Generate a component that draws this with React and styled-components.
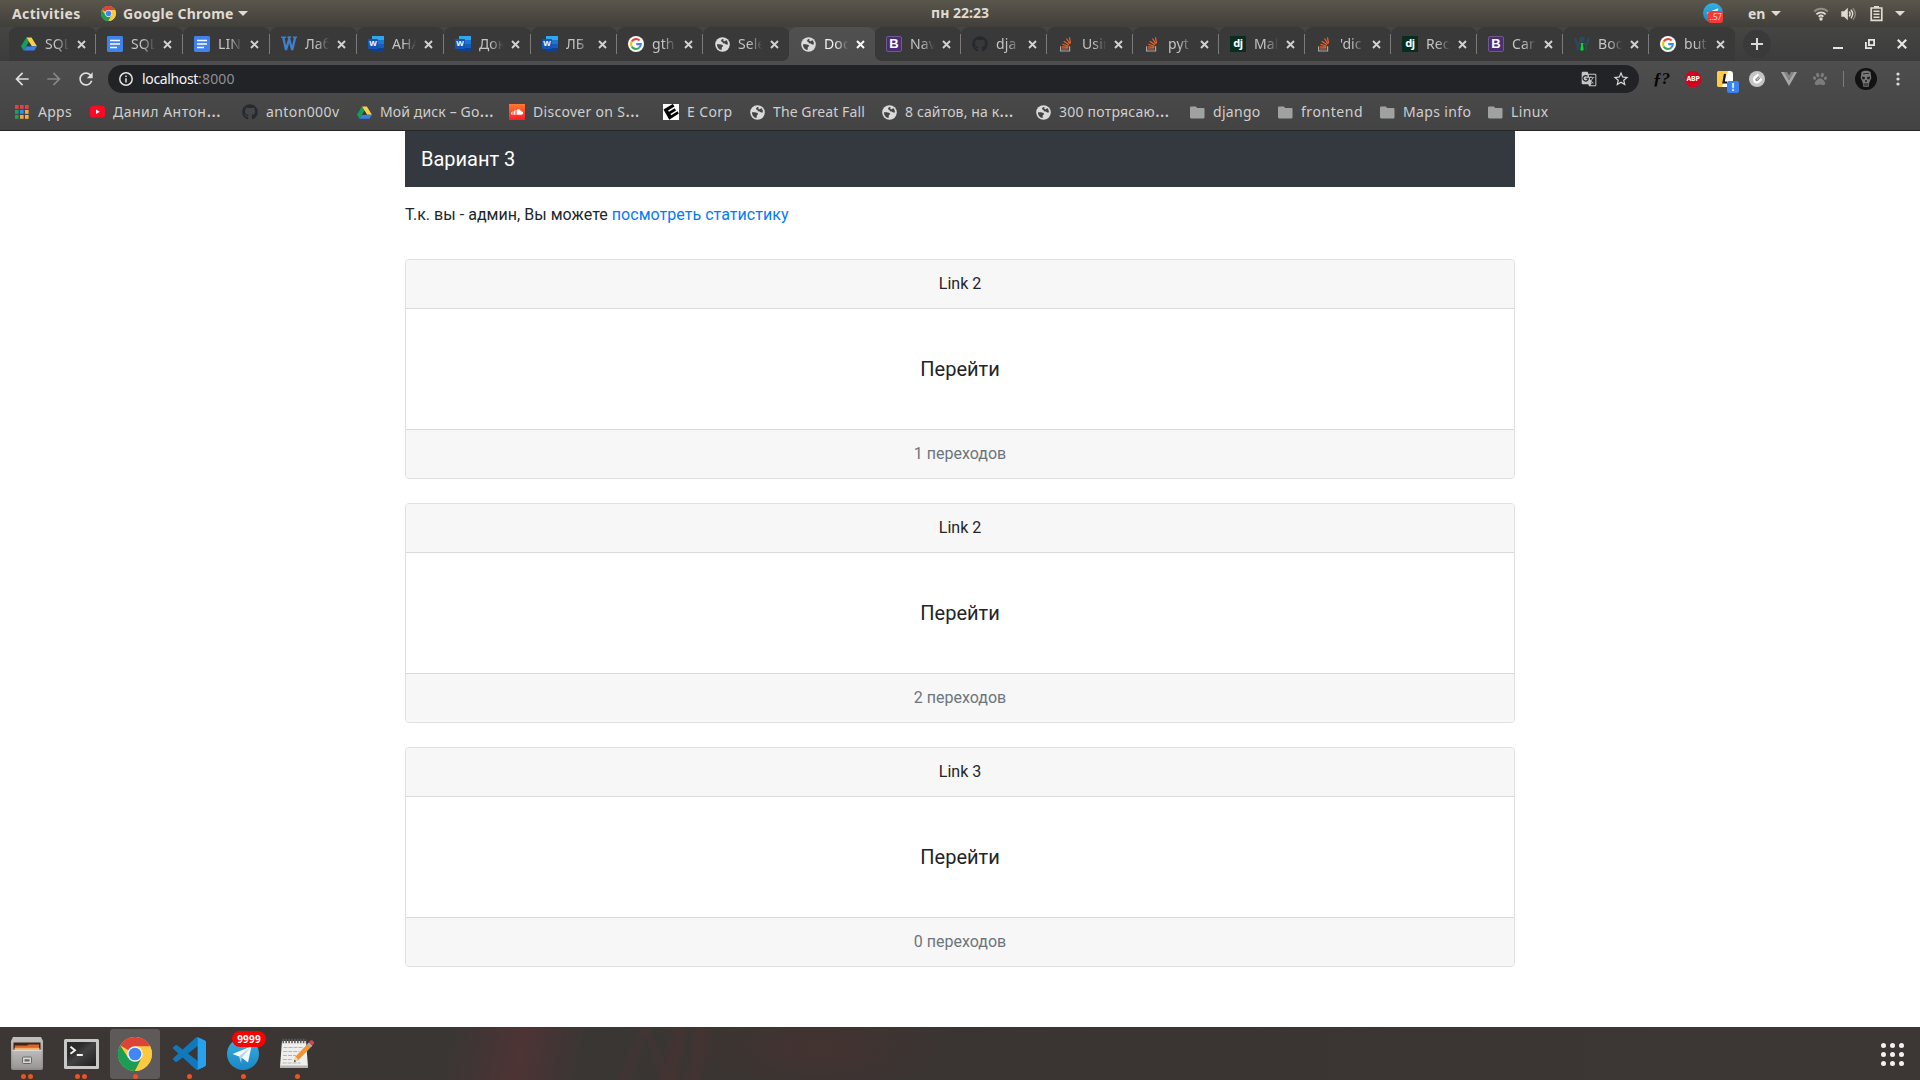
import React from "react";
import styled, { createGlobalStyle } from "styled-components";
import { FaGithub, FaPaw } from "react-icons/fa";
import { MdArrowBack, MdArrowForward, MdRefresh, MdStarBorder, MdGTranslate } from "react-icons/md";

const GlobalStyle = createGlobalStyle`
  *, *::before, *::after { box-sizing: border-box; }
  html, body { margin: 0; padding: 0; background: #fff; overflow: hidden; }
  svg { display: block; flex: none; }
`;

const uiFont = `"Noto Sans", "Open Sans", sans-serif`;

const Screen = styled.div`
  width: 1920px;
  height: 1080px;
  display: flex;
  flex-direction: column;
  overflow: hidden;
  font-family: ${uiFont};
`;

/* ---------- system bar ---------- */
const SystemBar = styled.header`
  height: 27px;
  display: grid;
  grid-template-columns: 1fr auto 1fr;
  align-items: center;
  background: linear-gradient(#5a564c, #403f3a);
  color: #dfdbd2;
  font-size: 14px;
  font-weight: 700;
  line-height: 27px;
`;
const SystemLeft = styled.div`
  display: flex;
  align-items: center;
  padding-left: 12px;
`;
const SystemRight = styled.div`
  display: flex;
  align-items: center;
  justify-content: flex-end;
  padding-right: 15px;
`;
const BarText = styled.span`
  width: ${(p) => (p.$w ? p.$w + "px" : "auto")};
  letter-spacing: ${(p) => p.$track || 0}px;
  white-space: nowrap;
`;
const Clock = styled(BarText)`
  padding-bottom: 2px;
  line-height: 25px;
`;
const Caret = styled.i`
  width: 0;
  height: 0;
  margin-left: ${(p) => p.$gap || 0}px;
  border: 5px solid transparent;
  border-top-color: #dfdbd2;
  border-bottom: 0;
`;
const Spacer = styled.span`
  flex: none;
  width: ${(p) => p.$w}px;
`;

/* ---------- tab strip ---------- */
const TabStrip = styled.nav`
  height: 34px;
  display: flex;
  padding-left: 9px;
  background: linear-gradient(#454544, #3c3c3c);
`;
const Tab = styled.div`
  position: relative;
  flex: none;
  width: ${(p) => p.$w}px;
  height: 34px;
  display: flex;
  align-items: center;
  padding-left: 11px;
  border-radius: 8px 8px 0 0;
  background: #393939;
  color: #c4c4c4;
  &:first-child { padding-left: 12px; }
  &::after {
    content: "";
    position: absolute;
    right: 0;
    top: 7px;
    width: 1px;
    height: 20px;
    background: ${(p) => (p.$divider ? "#7b7b7b" : "transparent")};
  }
`;
const ActiveTab = styled(Tab)`
  z-index: 1;
  background: linear-gradient(#505050, #4d4d4d);
  color: #f1f1f1;
  &::before, &::after {
    content: "";
    position: absolute;
    top: auto;
    bottom: 0;
    width: 6px;
    height: 6px;
  }
  &::before {
    left: -6px;
    background: radial-gradient(circle at 0 0, transparent 5.5px, #4d4d4d 6px);
  }
  &::after {
    right: -6px;
    background: radial-gradient(circle at 100% 0, transparent 5.5px, #4d4d4d 6px);
  }
`;
const TabTitle = styled.span`
  width: 25px;
  margin-left: 8px;
  white-space: nowrap;
  font-size: 14px;
  line-height: 20px;
  letter-spacing: 0.1px;
  mask-image: linear-gradient(90deg, #000 45%, transparent 98%);
`;
const IconBox = styled.span`
  flex: none;
  width: ${(p) => p.$w || 16}px;
  height: 16px;
  display: flex;
  align-items: center;
  justify-content: center;
`;
const CloseMark = styled.svg`
  width: 9px;
  height: 9px;
  margin-left: 7px;
`;
const NewTab = styled.div`
  width: 28px;
  height: 28px;
  margin: 3px 0 0 8px;
  border-radius: 50%;
  background: #3a3a3a;
  display: grid;
  place-items: center;
`;
const WindowButtons = styled.div`
  flex: 1;
  display: flex;
  align-items: center;
  justify-content: flex-end;
  gap: 22px;
  padding-right: 13px;
`;

/* ---------- toolbar ---------- */
const Toolbar = styled.div`
  height: 69px;
  background: linear-gradient(#4e4e4e, #434343);
  display: flex;
  flex-direction: column;
`;
const AddressRow = styled.div`
  height: 36px;
  display: flex;
  align-items: center;
  padding: 0 14px 0 12px;
`;
const NavButtons = styled.div`
  width: 96px;
  display: flex;
  gap: 12px;
`;
const Omnibox = styled.div`
  width: 1531px;
  height: 28px;
  border-radius: 14px;
  background: #222327;
  display: flex;
  align-items: center;
  padding: 0 9px 0 11px;
  font-size: 14px;
  line-height: 28px;
`;
const Host = styled.span`
  margin-left: 9px;
  color: #f4f4f4;
  letter-spacing: -0.35px;
`;
const Port = styled.span`
  flex: 1;
  color: #8f9093;
  letter-spacing: 0.2px;
`;
const Extensions = styled.div`
  flex: 1;
  height: 28px;
  display: flex;
  align-items: center;
  padding-left: 14px;
`;
const ExtSlot = styled.div`
  position: relative;
  flex: none;
  width: ${(p) => p.$w || 32}px;
  height: 20px;
  display: flex;
  align-items: center;
  justify-content: flex-start;
`;
const FontQuestion = styled.span`
  color: #060606;
  font: italic 700 17px/20px "Liberation Serif", serif;
`;
const AlertBadge = styled.b`
  position: absolute;
  left: 10px;
  top: 12px;
  width: 12px;
  height: 12px;
  border-radius: 2px;
  background: #3b82f0;
  color: #fff;
  font-size: 10px;
  line-height: 12px;
  text-align: center;
`;
const BookmarkBar = styled.div`
  height: 33px;
  display: flex;
  align-items: center;
  padding: 0 0 3px 14px;
`;
const Bookmark = styled.div`
  flex: none;
  width: ${(p) => p.$w}px;
  display: flex;
  align-items: center;
  color: #cfcfcf;
  font-size: 14px;
  line-height: 20px;
  white-space: nowrap;
`;
const BookmarkText = styled.span`
  margin-left: 8px;
  letter-spacing: ${(p) => p.$track || 0}px;
`;
const Ellipsis = styled.span`
  font-size: 18px;
  line-height: 10px;
  letter-spacing: 0;
`;

/* ---------- page ---------- */
const Page = styled.main`
  height: 897px;
  border-top: 1px solid #262626;
  background: #fff;
  font-family: Roboto, sans-serif;
  font-size: 16px;
  line-height: 24px;
  color: #212529;
`;
const Container = styled.div`
  width: 1110px;
  margin: 0 auto;
`;
const Navbar = styled.div`
  height: 56px;
  padding: 13px 16px;
  background: #33393f;
  color: #fff;
  font-size: 20px;
  line-height: 30px;
`;
const Notice = styled.p`
  margin: 16px 0 32px;
  height: 24px;
  letter-spacing: 0.035px;
`;
const Link = styled.a`
  color: #007bff;
  text-decoration: none;
`;
const Card = styled.section`
  height: 220px;
  margin-bottom: 24px;
  border: 1px solid #dfdfdf;
  border-radius: 4px;
  overflow: hidden;
  text-align: center;
`;
const CardHeader = styled.div`
  height: 49px;
  padding: 12px;
  background: #f7f7f7;
  border-bottom: 1px solid #d9d9d9;
`;
const CardBody = styled.div`
  height: 120px;
  display: grid;
  place-items: center;
  font-size: 20px;
`;
const CardFooter = styled.div`
  height: 49px;
  padding: 12px;
  background: #f7f7f7;
  border-top: 1px solid #d9d9d9;
  color: #6c757d;
`;

/* ---------- dock ---------- */
const Dock = styled.footer`
  height: 53px;
  display: flex;
  align-items: center;
  background:
    linear-gradient(102deg, transparent 445px, rgba(100, 48, 52, 0.3) 490px, rgba(104, 48, 54, 0.42) 515px, rgba(100, 48, 52, 0.22) 545px, transparent 575px),
    linear-gradient(112deg, transparent 590px, rgba(100, 48, 52, 0.18) 598px, transparent 606px),
    linear-gradient(68deg, transparent 612px, rgba(100, 48, 52, 0.16) 618px, transparent 624px),
    linear-gradient(100deg, transparent 655px, rgba(100, 44, 44, 0.26) 672px, transparent 680px, rgba(100, 44, 44, 0.24) 692px, transparent 706px),
    radial-gradient(ellipse 130px 50px at 820px 20px, rgba(100, 44, 44, 0.24), transparent),
    linear-gradient(90deg, #3c3634, #3a3634 560px, #393532 740px, #3a3433 1100px, #3c3634);
`;
const DockItem = styled.div`
  position: relative;
  width: 50px;
  height: 50px;
  margin: 0 2px;
  border-radius: 3px;
  background: ${(p) => (p.$active ? "#5e5a59" : "transparent")};
  display: grid;
  place-items: center;
`;
const Dots = styled.span`
  position: absolute;
  left: 0;
  right: 0;
  bottom: 0;
  display: flex;
  justify-content: center;
  gap: 2px;
`;
const Dot = styled.i`
  width: 5px;
  height: 5px;
  border-radius: 50%;
  background: #e95420;
`;
const CountBadge = styled.b`
  position: absolute;
  left: 14px;
  top: 2px;
  width: 34px;
  height: 16px;
  border-radius: 8px;
  background: #fb0000;
  color: #fff;
  font-size: 10px;
  line-height: 16px;
  letter-spacing: 0.2px;
  text-align: center;
`;
const DockLeft = styled.div`
  flex: 1;
  display: flex;
`;
const AppsGrid = styled.div`
  display: grid;
  grid-template-columns: repeat(3, 5px);
  gap: 4px;
  margin: 1px 16px 0 0;
`;
const GridDot = styled.i`
  width: 5px;
  height: 5px;
  border-radius: 50%;
  background: #f2f2f2;
`;

/* ---------- drawings ---------- */
const Chrome = ({ s = 16 }) => (
  <svg width={s} height={s} viewBox="0 0 48 48">
    <circle cx="24" cy="24" r="24" fill="#fdc93f" />
    <path d="M24 24 L3.2 12 A24 24 0 0 1 44.8 12 Z" fill="#db4437" />
    <path d="M24 13h20.8" stroke="#db4437" strokeWidth="2" />
    <path d="M3.2 12 A24 24 0 0 0 24 48 L33.5 29.5 L24 24 L14.5 29.5Z" fill="#1a9d55" />
    <path d="M24 13H45.3A24 24 0 0 1 24 48L33.5 29.5Z" fill="#fdc93f" />
    <circle cx="24" cy="24" r="11" fill="#f1f1f1" />
    <circle cx="24" cy="24" r="8.9" fill="#4285f4" />
  </svg>
);
const Drive = ({ s = 16 }) => (
  <svg width={s} height={s} viewBox="0 0 16 16">
    <path d="M5.3 1.5h5.2L16 10.3h-5.3z" fill="#ffcf48" />
    <path d="M5.3 1.5L0 10.3l2.7 4.3L8 6z" fill="#12a05c" />
    <path d="M5.4 10.3H16l-2.7 4.3H2.7z" fill="#3d7eea" />
    <path d="M8 6l2.7 4.3H5.4z" fill="#393939" />
  </svg>
);
const Docs = () => (
  <svg width="16" height="16" viewBox="0 0 16 16">
    <rect width="16" height="16" rx="1.4" fill="#3f82ee" />
    <path d="M3 4.5h10M3 8h10M3 11.5h7" stroke="#fff" strokeWidth="1.7" />
  </svg>
);
const WLetter = () => (
  <svg width="16" height="16" viewBox="0 0 16 16" fill="none" stroke="#3f7fcd">
    <path d="M.2 1.2h5M6.4 1.2h3.8M12 1.2h4" strokeWidth="1.5" />
    <path d="M2.2 1L5 14 8.2 3l3 11L14.3 1" strokeWidth="2.3" />
  </svg>
);
const WordGlyph = styled.span`
  width: 16px;
  height: 16px;
  display: flex;
  align-items: center;
  background: linear-gradient(#2fa7ea 0 25%, #1a78d0 25% 50%, #155cbe 50% 75%, #10408f 75%) right / 12px 16px no-repeat;
  &::before {
    content: "W";
    width: 10px;
    height: 10px;
    border-radius: 1px;
    background: #1555b5;
    color: #fff;
    font: 700 8px/10px "Liberation Sans", sans-serif;
    text-align: center;
  }
`;
const Google = () => (
  <svg width="16" height="16" viewBox="0 0 16 16" fill="none" strokeWidth="2.1">
    <circle cx="8" cy="8" r="8" fill="#fff" />
    <path d="M11.6 4.6A5 5 0 0 0 3.700 5.500" stroke="#ea4335" />
    <path d="M3.700 5.500a5 5 0 0 0 0 5" stroke="#fbbc05" />
    <path d="M3.700 10.500a5 5 0 0 0 7.500 1.300" stroke="#34a853" />
    <path d="M11.200 11.800A4.800 4.800 0 0 0 12.800 8.100H8.200" stroke="#4285f4" />
  </svg>
);
const Globe = ({ s = 15 }) => (
  <svg width={s} height={s} viewBox="0 0 16 16">
    <circle cx="8" cy="8" r="7.8" fill="#dadada" />
    <path d="M9 2.200c-1.300 0-2.300.6-2.500 1.600-.2.800.4 1.500 1.600 1.600l.2 1.300 2 .2 1.500 1.200h1.900c.3-1.900-.4-3.700-1.800-4.800l-1.300 1.200-1.600-.3z" fill="#444" />
    <path d="M2.100 7.700h3.200l2.800.7.600 1.300-1.400 1.200-.3 2.900c-2.700-.3-4.900-2.700-4.900-6.100z" fill="#444" />
  </svg>
);
const BootGlyph = styled.span`
  width: 16px;
  height: 16px;
  border-radius: 2px;
  border: 1px solid #6e5a8c;
  background: #4c2d73;
  color: #fff;
  font: 700 13px/14px "Liberation Sans", sans-serif;
  text-align: center;
`;
const DjGlyph = styled.span`
  width: 16px;
  height: 16px;
  background: #092e20;
  color: #fff;
  font: 700 11px/13px "Noto Sans", sans-serif;
  letter-spacing: -0.3px;
  text-align: center;
`;
const Stack = () => (
  <svg width="16" height="16" viewBox="0 0 16 16" fill="none">
    <path d="M2.600 10.200V15h9V10.200" stroke="#a5a8ab" strokeWidth="1.2" />
    <path d="M4 13h6.300M4 10.900l6.300.5M4.400 8.300l6.100 1.900M5.700 5.200l5.300 3.500M8.500 2.500l3.300 5.300M11.500 1.300l1 6" stroke="#f2652b" strokeWidth="1.15" />
  </svg>
);
const BootMan = () => (
  <svg width="16" height="16" viewBox="0 0 16 16">
    <path d="M1.200 1.500l1.200 5.200 2.400 1.300h6.400l2.400-1.300 1.200-5.200M3.700 8v6.500M12.300 8v6.500" fill="none" stroke="#2b4a56" strokeWidth="2.300" />
    <circle cx="8" cy="3.600" r="3" fill="#2b4a56" />
    <path d="M6.700 7h2.600l-.5 1.700.9 5L8 15l-1.700-1.300.9-5z" fill="#00dd34" />
  </svg>
);
const AppsIcon = () => (
  <svg width="14" height="14" viewBox="0 0 14 14">
    {["#ea4045", "#ea4045", "#ea4045", "#18a363", "#2196f3", "#f5a742", "#18a363", "#f5a742", "#f5b342"].map((c, i) => (
      <rect key={i} x={(i % 3) * 5} y={Math.floor(i / 3) * 5} width="3.600" height="3.800" fill={c} />
    ))}
  </svg>
);
const YouTube = () => (
  <svg width="15" height="12" viewBox="0 0 15 12">
    <rect width="15" height="11.500" rx="2.500" fill="#fb0a25" />
    <path d="M6 3.600v4.400l3.800-2.200z" fill="#fff" />
  </svg>
);
const SoundCloud = () => (
  <svg width="16" height="16" viewBox="0 0 16 16">
    <defs>
      <linearGradient id="sc" x2="0" y2="1">
        <stop stopColor="#ff7a2b" />
        <stop offset="1" stopColor="#ff1b2e" />
      </linearGradient>
    </defs>
    <rect width="16" height="16" fill="url(#sc)" />
    <path d="M2.500 8.300v2.200M4 7.300v3.500M5.500 6.500v4.300M7 6v4.800" stroke="#fff" strokeWidth=".9" />
    <path d="M8 5.400c2-.8 3.700.3 4 2 1.300-.2 2.100.6 2.100 1.700s-.8 1.700-1.700 1.700H8z" fill="#fff" />
  </svg>
);
const ECorp = () => (
  <svg width="16" height="16" viewBox="0 0 16 16">
    <rect width="16" height="16" fill="#fff" />
    <path d="M.5 5.500L9.800 0l1.700 2.500L5 6.400l1 1.300 5.700-3.500 1.400 2.200-5.700 3.500.8 1.300 6.400-4 1.200 2.200L6.300 15.700z" fill="#000" />
  </svg>
);
const Folder = () => (
  <svg width="15" height="13" viewBox="0 0 15 13">
    <path d="M1.300.5h4.500l1.500 1.600h6c.8 0 1.200.5 1.200 1.200v8c0 .8-.4 1.200-1.200 1.200h-12C.5 12.500 0 12 0 11.300v-9.500C0 1 .5.500 1.300.5z" fill="#a0a2a1" />
  </svg>
);
const Info = () => (
  <svg width="14" height="14" viewBox="0 0 14 14" fill="none" stroke="#e4e4e4">
    <circle cx="7" cy="7" r="6.200" strokeWidth="1.500" />
    <path d="M7 6.200v4.200M7 3.400v1.500" strokeWidth="1.500" />
  </svg>
);
const Telegram = ({ s }) => (
  <svg width={s} height={s} viewBox="0 0 32 32">
    <defs>
      <linearGradient id="tg" x2="0" y2="1">
        <stop stopColor="#37aee2" />
        <stop offset="1" stopColor="#1b87c4" />
      </linearGradient>
    </defs>
    <circle cx="16" cy="16" r="16" fill="url(#tg)" />
    <path d="M5.500 16L24.500 8.200 21 24.500 14.500 19.500z" fill="#f3f8fb" />
    <path d="M12 18.500L24.500 8.200 14.800 19.500 14 25z" fill="#b7d3e4" />
  </svg>
);
const TrayTelegram = styled.span`
  position: relative;
  width: 20px;
  height: 20px;
  margin-top: -1px;
`;
const TrayBadge = styled.span`
  position: absolute;
  left: 5px;
  top: 8px;
  width: 15px;
  height: 12px;
  border-radius: 3px;
  background: #f33a35;
  color: #ffd9d6;
  font-size: 8px;
  font-weight: 400;
  line-height: 12px;
  letter-spacing: -0.3px;
  text-align: center;
`;
const Wifi = () => (
  <svg width="16" height="14" viewBox="0 0 16 14" fill="none" stroke="#dfdbd2" strokeWidth="1.900">
    <path d="M1.200 4.600a9.500 9.500 0 0 1 13.600 0" opacity=".45" />
    <path d="M3.400 7.300a6.500 6.500 0 0 1 9.200 0M5.700 9.700a3.300 3.300 0 0 1 4.600 0" />
    <circle cx="8" cy="12" r="1.700" fill="#dfdbd2" stroke="none" />
  </svg>
);
const Volume = () => (
  <svg width="16" height="14" viewBox="0 0 16 14" fill="none" stroke="#dfdbd2" strokeWidth="1.400">
    <path d="M.3 4.300h2.800L6.800.8v12.400L3.100 9.700H.3z" fill="#dfdbd2" stroke="none" />
    <path d="M8.300 4.500c1 1.500 1 3.500 0 5M10 2.800c2 2.600 2 5.800 0 8.400" />
    <path d="M12 1.200c2.900 3.600 2.900 8 0 11.600" opacity=".4" />
  </svg>
);
const Battery = () => (
  <svg width="13" height="17" viewBox="0 0 13 17" fill="none" stroke="#dfdbd2">
    <path d="M4 1.800h5M1.200 3h10.600v12.300H1.200z" strokeWidth="1.700" />
    <path d="M3.500 6.300h6M3.500 9.300h6M3.500 12.300h6" strokeWidth="1.600" />
  </svg>
);
const Abp = styled.span`
  width: 16px;
  height: 16px;
  background: #d4021d;
  clip-path: polygon(30% 0, 70% 0, 100% 30%, 100% 70%, 70% 100%, 30% 100%, 0 70%, 0 30%);
  color: #fff;
  font: 700 7px/16px "Noto Sans", sans-serif;
  text-align: center;
  letter-spacing: -0.2px;
`;
const Files = () => (
  <svg width="32" height="33" viewBox="0 0 32 33">
    <defs>
      <linearGradient id="fl" x2="0" y2="1">
        <stop stopColor="#c3c2c0" />
        <stop offset="1" stopColor="#8c8a88" />
      </linearGradient>
      <linearGradient id="fd" x2="0" y2="1">
        <stop stopColor="#bdbcba" />
        <stop offset="1" stopColor="#999795" />
      </linearGradient>
    </defs>
    <path d="M2 0h28l2 4v27a2 2 0 0 1-2 2H2a2 2 0 0 1-2-2V4z" fill="url(#fl)" />
    <path d="M2.500 5.500h27v8.500h-27z" fill="#3e2518" />
    <path d="M4 8.500h12l1.500-1H28V13H4z" fill="#d9652a" />
    <path d="M3.500 10.800h25v2.200h-25z" fill="#f2b063" />
    <path d="M1.500 13h29v18.500h-29z" fill="url(#fd)" />
    <path d="M1.500 13.300h29" stroke="#e2e1df" />
    <rect x="11.500" y="20" width="9" height="6.500" rx="1" fill="#d8d8d6" stroke="#666" />
    <rect x="13.500" y="22.300" width="5" height="2.200" fill="#666" />
  </svg>
);
const Terminal = () => (
  <svg width="35" height="30" viewBox="0 0 35 30">
    <defs>
      <linearGradient id="tm" x2="1" y2="1">
        <stop offset=".3" stopColor="#2b2b2b" />
        <stop offset=".5" stopColor="#424242" />
        <stop offset="1" stopColor="#202020" />
      </linearGradient>
    </defs>
    <rect width="35" height="30" rx="1.500" fill="#c9c9c7" />
    <rect x="3" y="3" width="29" height="24" fill="url(#tm)" />
    <path d="M6.500 7.800l4.500 3.500-4.500 3.500M12.800 16h6" fill="none" stroke="#f4f4f4" strokeWidth="1.900" />
  </svg>
);
const Code = () => (
  <svg width="33" height="33" viewBox="0 0 24 24">
    <path d="M23.150 2.587L18.210.210a1.494 1.494 0 0 0-1.705.290l-9.460 8.630-4.120-3.128a.999.999 0 0 0-1.276.057L.327 7.261A1 1 0 0 0 .326 8.740L3.899 12 .326 15.260a1 1 0 0 0 .001 1.479L1.650 17.940a.999.999 0 0 0 1.276.057l4.120-3.128 9.460 8.630a1.492 1.492 0 0 0 1.704.290l4.942-2.377A1.500 1.500 0 0 0 24 20.060V3.939a1.500 1.500 0 0 0-.850-1.352zm-5.146 14.861L10.826 12l7.178-5.448v10.896z" fill="#1277bb" />
    <path d="M18 .150l5.150 2.437A1.500 1.500 0 0 1 24 3.939V20.060a1.500 1.500 0 0 1-.850 1.352L18 23.850z" fill="#28a0ee" />
  </svg>
);
const Notes = () => (
  <svg width="36" height="32" viewBox="0 0 36 32">
    <path d="M3 3h24l2 26H1z" fill="#eeeeec" />
    <path d="M1 27.500h28V30H1z" fill="#b4b4b1" />
    <path d="M3.500 3h24" stroke="#5b5b59" strokeWidth="4.500" strokeDasharray="1.600 1.300" />
    <path d="M4.500 9.500h20M4.300 13.500h16M4 17.500h13M3.800 21.500h10M3.600 25h18" stroke="#b5b5b3" strokeWidth="1" strokeDasharray="4 1" />
    <path d="M15 24l1.500-5.500L29.500 5l3.500 3-13.500 14z" fill="#f2952c" />
    <path d="M15 24l1.500-5.500 3 3.500z" fill="#f3d7ae" />
    <path d="M15 24l.700-2.300 1.300 1.500z" fill="#222" />
    <path d="M28.300 6.200l3.500 3 1.500-1.600-3.500-3z" fill="#aab0bd" />
    <path d="M29.800 4.600l1.700-2c1.500-1 4.300 1.300 3.400 3l-1.600 2z" fill="#d9434b" />
  </svg>
);

const folder = <Folder />;
const word = <WordGlyph />;
const tabs = [
  [<Drive />, "SQL", 87], [<Docs />, "SQL", 87], [<Docs />, "LIN", 87], [<WLetter />, "Лаб", 87],
  [word, "АНА", 87], [word, "Док", 87], [word, "ЛБ", 86], [<Google />, "gth", 86],
  [<Globe />, "Sele", 86], [<Globe />, "Doc", 86], [<BootGlyph>B</BootGlyph>, "Nav", 86],
  [<FaGithub size={16} color="#252a30" />, "dja", 86], [<Stack />, "Usin", 86], [<Stack />, "pyt", 86],
  [<DjGlyph>dj</DjGlyph>, "Mal", 86], [<Stack />, "'dic", 86], [<DjGlyph>dj</DjGlyph>, "Rec", 86],
  [<BootGlyph>B</BootGlyph>, "Car", 86], [<BootMan />, "Boo", 86], [<Google />, "but", 86],
];
const activeIndex = 9;
const bookmarks = [
  [<AppsIcon />, "Apps", 75, 0.25], [<YouTube />, "Данил Антон…", 153, 0.5],
  [<FaGithub size={16} color="#252a30" />, "anton000v", 114, 0.4], [<Drive s={15} />, "Мой диск – Go…", 153, 0.13],
  [<SoundCloud />, "Discover on S…", 154, 0.3], [<ECorp />, "E Corp", 86, 0.4], [<Globe />, "The Great Fall", 132, 0.1],
  [<Globe />, "8 сайтов, на к…", 154, 0.13], [<Globe />, "300 потрясаю…", 154, 0.23], [folder, "django", 88, 0.3],
  [folder, "frontend", 102, 0.55], [folder, "Maps info", 108, 0.35], [folder, "Linux", 80, 0.4],
];
const cards = [["Link 2", 1], ["Link 2", 2], ["Link 3", 0]];

const dock = [
  { icon: <Files />, dots: 2 },
  { icon: <Terminal />, dots: 2 },
  { icon: <Chrome s={34} />, dots: 1, active: true },
  { icon: <Code />, dots: 1 },
  { icon: <Telegram s={32} />, dots: 1, badge: "9999" },
  { icon: <Notes />, dots: 1 },
];

export default function App() {
  return (
    <Screen>
      <GlobalStyle />
      <SystemBar>
        <SystemLeft>
          <BarText $w={89} $track={0.37}>Activities</BarText>
          <Chrome s={15} />
          <Spacer $w={7} />
          <BarText $w={110} $track={0.25}>Google Chrome</BarText>
          <Caret $gap={5} />
        </SystemLeft>
        <Clock>пн 22:23</Clock>
        <SystemRight>
          <TrayTelegram>
            <Telegram s={20} />
            <TrayBadge>..57</TrayBadge>
          </TrayTelegram>
          <Spacer $w={25} />
          <BarText $w={18}>en</BarText>
          <Caret $gap={5} />
          <Spacer $w={32} />
          <Wifi />
          <Spacer $w={12} />
          <Volume />
          <Spacer $w={13} />
          <Battery />
          <Caret $gap={12} />
        </SystemRight>
      </SystemBar>

      <TabStrip>
        {tabs.map(([icon, title, w], i) => {
          const active = i === activeIndex;
          const TabShape = active ? ActiveTab : Tab;
          return (
            <TabShape key={i} $w={w} $divider={i !== activeIndex - 1 && i !== 19}>
              <IconBox>{icon}</IconBox>
              <TabTitle>{title}</TabTitle>
              <CloseMark viewBox="0 0 9 9">
                <path d="M1 1l7 7M8 1L1 8" stroke={active ? "#fff" : "#d2d2d2"} strokeWidth="1.900" />
              </CloseMark>
            </TabShape>
          );
        })}
        <NewTab>
          <svg width="12" height="12" viewBox="0 0 12 12">
            <path d="M6 0v12M0 6h12" stroke="#dadada" strokeWidth="2" />
          </svg>
        </NewTab>
        <WindowButtons>
          <svg width="10" height="10" viewBox="0 0 10 10"><path d="M0 9h10" stroke="#e6e6e6" strokeWidth="2" /></svg>
          <svg width="10" height="10" viewBox="0 0 10 10" fill="none" stroke="#e6e6e6" strokeWidth="1.800">
            <path d="M3.900.9h5.200v5.200H3.900z" />
            <path d="M.9 3v6.100H7" />
          </svg>
          <svg width="10" height="10" viewBox="0 0 10 10"><path d="M.8.8l8.400 8.400M9.200.8L.8 9.200" stroke="#e6e6e6" strokeWidth="2.200" /></svg>
        </WindowButtons>
      </TabStrip>

      <Toolbar>
        <AddressRow>
          <NavButtons>
            <MdArrowBack size={20} color="#dedede" />
            <MdArrowForward size={20} color="#858585" />
            <MdRefresh size={20} color="#dedede" />
          </NavButtons>
          <Omnibox>
            <Info />
            <Host>localhost</Host>
            <Port>:8000</Port>
            <MdGTranslate size={16} color="#c6c6c6" />
            <Spacer $w={15} />
            <MdStarBorder size={18} color="#d8d8d8" />
          </Omnibox>
          <Extensions>
            <ExtSlot><FontQuestion>ƒ?</FontQuestion></ExtSlot>
            <ExtSlot><Abp>ABP</Abp></ExtSlot>
            <ExtSlot>
              <svg width="16" height="16" viewBox="0 0 16 16">
                <rect width="16" height="16" rx="3" fill="#fff" />
                <path d="M2 0h9L5 16H2a2 2 0 0 1-2-2V2a2 2 0 0 1 2-2z" fill="#ffcd45" />
                <path d="M8 3L6.500 11.500H10" stroke="#111" strokeWidth="2.200" fill="none" />
              </svg>
              <AlertBadge>!</AlertBadge>
            </ExtSlot>
            <ExtSlot>
              <svg width="16" height="16" viewBox="0 0 16 16">
                <circle cx="8" cy="8" r="8" fill="#c5c5c5" />
                <path d="M9.500 3.500L6 6.300a2.900 2.900 0 1 0 4 4.200l2.500-2.800" fill="none" stroke="#fff" strokeWidth="2.400" />
                <path d="M9.800 5.800L7.200 8.200a.9.9 0 1 0 1.300 1.200l2.200-2.200" fill="none" stroke="#777" strokeWidth="1" />
              </svg>
            </ExtSlot>
            <ExtSlot>
              <svg width="16" height="14" viewBox="0 0 16 14">
                <path d="M0 0h3.200L8 8.300 12.800 0H16L8 13.900z" fill="#a7a7a7" />
                <path d="M3.200 0H6l2 3.400L10 0h2.800L8 8.300z" fill="#858585" />
              </svg>
            </ExtSlot>
            <ExtSlot $w={30}><FaPaw size={14} color="#7c7c7c" /></ExtSlot>
            <svg width="53" height="22" viewBox="0 0 53 22">
              <path d="M0 3h1v16H0z" fill="#7d7d7d" />
              <circle cx="23" cy="11" r="11" fill="#121212" />
              <path d="M18.500 4c2.500-1.800 6.500-1.800 9 0l.8 6-1.800 4-1 5h-5l-1-5-1.800-4z" fill="#777" />
              <path d="M19 8.500l3 .8-.5 2h-2zM27 8.500l-3 .8.5 2h2zM22.300 12h1.400v2h-1.400zM20.500 15.500h5v1h-5zM21 17.500h4v.8h-4zM20 5.500l6-.5v.8l-6 .4z" fill="#151515" />
            </svg>
            <svg width="4" height="14" viewBox="0 0 4 14">
              <circle cx="2" cy="2" r="1.600" fill="#dedede" />
              <circle cx="2" cy="7" r="1.600" fill="#dedede" />
              <circle cx="2" cy="12" r="1.600" fill="#dedede" />
            </svg>
          </Extensions>
        </AddressRow>
        <BookmarkBar>
          {bookmarks.map(([icon, label, w, track]) => (
            <Bookmark key={label} $w={w}>
              <IconBox>{icon}</IconBox>
              <BookmarkText $track={track}>
                {label.replace("…", "")}
                {label.endsWith("…") && <Ellipsis>…</Ellipsis>}
              </BookmarkText>
            </Bookmark>
          ))}
        </BookmarkBar>
      </Toolbar>

      <Page>
        <Container>
          <Navbar>Вариант 3</Navbar>
          <Notice>
            Т.к. вы - админ, Вы можете <Link>посмотреть статистику</Link>
          </Notice>
          {cards.map(([title, count], i) => (
            <Card key={i}>
              <CardHeader>{title}</CardHeader>
              <CardBody>Перейти</CardBody>
              <CardFooter>{count} переходов</CardFooter>
            </Card>
          ))}
        </Container>
      </Page>

      <Dock>
        <DockLeft>
          {dock.map((d, i) => (
            <DockItem key={i} $active={d.active}>
              {d.icon}
              {d.badge && <CountBadge>{d.badge}</CountBadge>}
              <Dots>
                {Array.from({ length: d.dots }, (_, k) => <Dot key={k} />)}
              </Dots>
            </DockItem>
          ))}
        </DockLeft>
        <AppsGrid>
          {Array.from({ length: 9 }, (_, k) => <GridDot key={k} />)}
        </AppsGrid>
      </Dock>
    </Screen>
  );
}
